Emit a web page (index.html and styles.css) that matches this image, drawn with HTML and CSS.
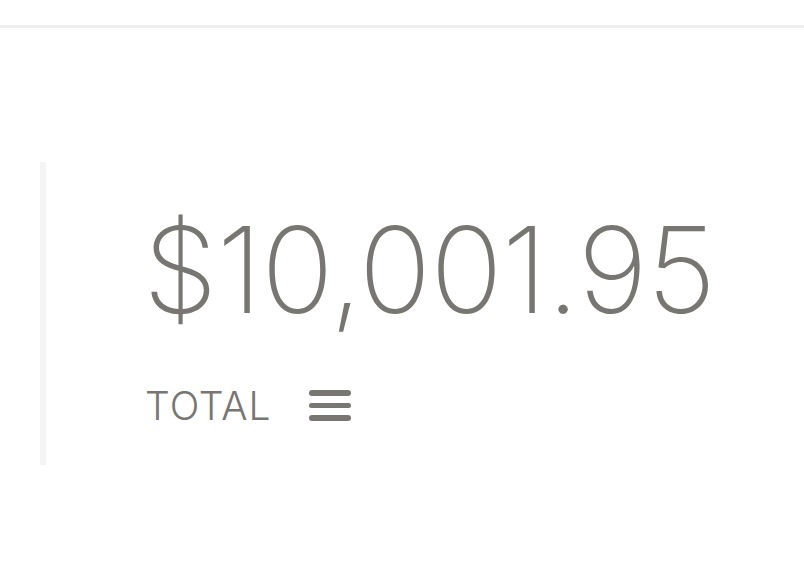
FILE: index.html
```html
<!DOCTYPE html>
<html>
<head>
    <title>Total</title>
    <link rel="stylesheet" href="styles.css">
</head>
<body>
    <!-- Top bar -->
    <div class="topbar"></div>

    <!-- Total panel -->
    <div class="panel">
        <div class="amount">$10,001.95</div>
        <div class="label">
            <span>TOTAL</span>
            <span class="menu-icon">
                <i></i><i></i><i></i>
            </span>
        </div>
    </div>
</body>
</html>
```

FILE: styles.css
```css
body {
    margin: 0;
    padding: 0;
    background: #fff;
    color: #777673;
    font-family: 'Inter', 'Liberation Sans', sans-serif;
}

/* Top bar */
.topbar {
    height: 25px;
    border-bottom: 3px solid #eeeeee;
}

/* Panel with left rule */
.panel {
    margin: 134px 0 0 40px;
    height: 303px;
    border-left: 6px solid #f4f4f4;
    padding-left: 97px;
    box-sizing: border-box;
}

.amount {
    font-size: 120px;
    font-weight: 150;
    line-height: 1;
    padding-top: 48px;
    letter-spacing: -1px;
}

.label {
    display: flex;
    align-items: center;
    gap: 37px;
    margin-top: 52px;
    padding-left: 2px;
    font-size: 39px;
    font-weight: 300;
    letter-spacing: 1px;
}

.menu-icon {
    display: flex;
    flex-direction: column;
    gap: 7px;
    width: 42px;
}
.menu-icon i {
    display: block;
    height: 5.5px;
    border-radius: 3px;
    background: #777673;
}
```
